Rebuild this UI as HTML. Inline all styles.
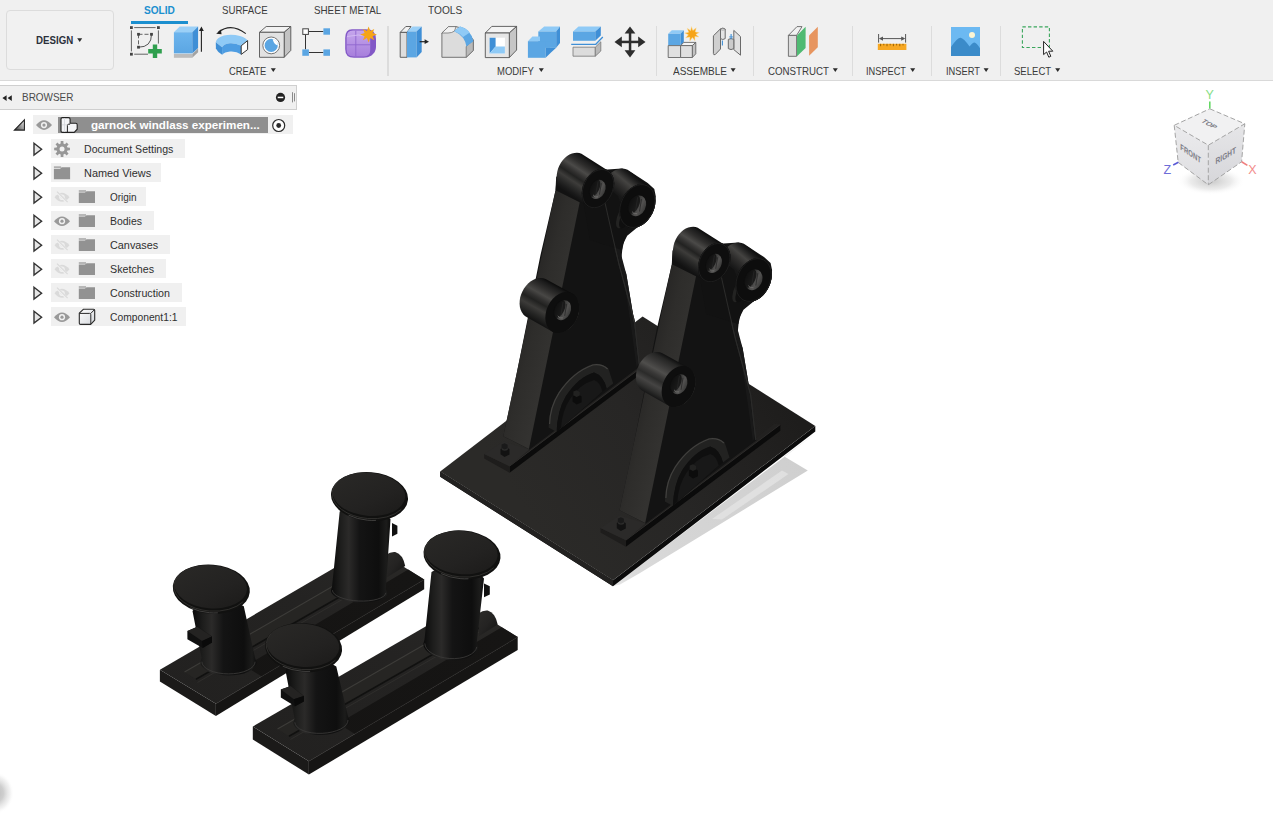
<!DOCTYPE html>
<html>
<head>
<meta charset="utf-8">
<title>Fusion 360</title>
<style>
html,body{margin:0;padding:0;background:#fff;}
body{width:1273px;height:819px;overflow:hidden;position:relative;font-family:"Liberation Sans",sans-serif;color:#3c3c3c;}
#toolbar{position:absolute;left:0;top:0;width:1273px;height:80px;background:#f0f0f0;border-bottom:1px solid #d9d9d9;}
#ws{position:absolute;left:5.5px;top:9.5px;width:108.5px;height:60.5px;border:1px solid #dcdcdc;border-radius:4px;box-sizing:border-box;background:#f1f1f1;}
.t{position:absolute;white-space:nowrap;line-height:1;transform-origin:0 0;}
.tab{font-size:10.5px;color:#3a3a3a;top:4.9px;}
.lbl{font-size:10.5px;color:#3a3a3a;top:65.7px;}
.sep{position:absolute;top:26px;width:1.5px;height:50px;background:#dcdcdc;}
.arr{position:absolute;width:0;height:0;border-left:2.6px solid transparent;border-right:2.6px solid transparent;border-top:3.6px solid #2b2b2b;top:68.5px;}
.ic{position:absolute;overflow:visible;}
#browser{position:absolute;left:0;top:85px;width:297px;height:25px;box-sizing:border-box;background:#f0f0f0;border:1px solid #cfcfcf;border-left:none;}
.rowbg{position:absolute;height:19px;background:#f0f0f0;}
.rt{font-size:10.5px;color:#2f2f2f;}
#canvas{position:absolute;left:0;top:0;}
</style>
</head>
<body>
<!-- 3D viewport -->
<svg id="canvas" width="1273" height="819" viewBox="0 0 1273 819">
<defs>
<linearGradient id="plateG" gradientUnits="userSpaceOnUse" x1="540" y1="535" x2="775" y2="385">
 <stop offset="0" stop-color="#2b2a28"/><stop offset="0.5" stop-color="#272625"/><stop offset="0.8" stop-color="#222120"/><stop offset="1" stop-color="#1e1d1c"/></linearGradient>
<linearGradient id="slabG" gradientUnits="userSpaceOnUse" x1="520" y1="300" x2="560" y2="310">
 <stop offset="0" stop-color="#242322"/><stop offset="0.5" stop-color="#2e2d2b"/><stop offset="1" stop-color="#333230"/></linearGradient>
<linearGradient id="cylG" gradientUnits="userSpaceOnUse" x1="587" y1="152" x2="561" y2="190">
 <stop offset="0" stop-color="#0d0d0d"/><stop offset="0.18" stop-color="#1a1a1a"/><stop offset="0.42" stop-color="#3d3c3b"/><stop offset="0.55" stop-color="#262625"/><stop offset="0.72" stop-color="#3a3938"/><stop offset="0.86" stop-color="#1c1c1c"/><stop offset="1" stop-color="#101010"/></linearGradient>
<linearGradient id="cyl2G" gradientUnits="userSpaceOnUse" x1="632" y1="170" x2="612" y2="198">
 <stop offset="0" stop-color="#0d0d0d"/><stop offset="0.3" stop-color="#353433"/><stop offset="0.55" stop-color="#1e1e1e"/><stop offset="1" stop-color="#0c0c0c"/></linearGradient>
<linearGradient id="cylMG" gradientUnits="userSpaceOnUse" x1="540" y1="274" x2="515" y2="312">
 <stop offset="0" stop-color="#0d0d0d"/><stop offset="0.2" stop-color="#1c1c1c"/><stop offset="0.42" stop-color="#3a3938"/><stop offset="0.58" stop-color="#252524"/><stop offset="0.75" stop-color="#363534"/><stop offset="1" stop-color="#0f0f0f"/></linearGradient>
<linearGradient id="holeG" x1="0" y1="0" x2="1" y2="0">
 <stop offset="0" stop-color="#1a1a1a"/><stop offset="0.4" stop-color="#3c3c3b"/><stop offset="0.7" stop-color="#525150"/><stop offset="1" stop-color="#3a3a39"/></linearGradient>
<linearGradient id="shadowG" gradientUnits="userSpaceOnUse" x1="620" y1="585" x2="810" y2="460">
 <stop offset="0" stop-color="#e4e4e4"/><stop offset="0.08" stop-color="#dadada"/><stop offset="0.35" stop-color="#d5d5d5"/><stop offset="1" stop-color="#cfcfcf"/></linearGradient>

<linearGradient id="cg1_A" gradientUnits="userSpaceOnUse" x1="642.5" y1="180.3" x2="612.8" y2="215.3"><stop offset="0" stop-color="#0a0a0a"/><stop offset="0.1" stop-color="#1c1c1c"/><stop offset="0.26" stop-color="#444341"/><stop offset="0.4" stop-color="#2e2d2c"/><stop offset="0.58" stop-color="#181818"/><stop offset="1" stop-color="#0c0c0c"/></linearGradient>
<linearGradient id="cg2_A" gradientUnits="userSpaceOnUse" x1="596.6" y1="163.1" x2="574.0" y2="197.5"><stop offset="0" stop-color="#0a0a0a"/><stop offset="0.08" stop-color="#1a1a1a"/><stop offset="0.22" stop-color="#2f2e2d"/><stop offset="0.36" stop-color="#4b4a48"/><stop offset="0.46" stop-color="#343332"/><stop offset="0.56" stop-color="#222221"/><stop offset="0.68" stop-color="#3d3c3a"/><stop offset="0.8" stop-color="#2a2a29"/><stop offset="0.92" stop-color="#1a1a1a"/><stop offset="1" stop-color="#121212"/></linearGradient>
<linearGradient id="cg3_A" gradientUnits="userSpaceOnUse" x1="559.7" y1="286.6" x2="538.9" y2="324.2"><stop offset="0" stop-color="#0a0a0a"/><stop offset="0.08" stop-color="#1b1b1b"/><stop offset="0.22" stop-color="#302f2e"/><stop offset="0.36" stop-color="#484745"/><stop offset="0.46" stop-color="#323130"/><stop offset="0.56" stop-color="#212120"/><stop offset="0.7" stop-color="#3c3b39"/><stop offset="0.84" stop-color="#262625"/><stop offset="1" stop-color="#111111"/></linearGradient>
<linearGradient id="cg4_B" gradientUnits="userSpaceOnUse" x1="642.5" y1="180.3" x2="612.8" y2="215.3"><stop offset="0" stop-color="#0a0a0a"/><stop offset="0.1" stop-color="#1c1c1c"/><stop offset="0.26" stop-color="#444341"/><stop offset="0.4" stop-color="#2e2d2c"/><stop offset="0.58" stop-color="#181818"/><stop offset="1" stop-color="#0c0c0c"/></linearGradient>
<linearGradient id="cg5_B" gradientUnits="userSpaceOnUse" x1="596.6" y1="163.1" x2="574.0" y2="197.5"><stop offset="0" stop-color="#0a0a0a"/><stop offset="0.08" stop-color="#1a1a1a"/><stop offset="0.22" stop-color="#2f2e2d"/><stop offset="0.36" stop-color="#4b4a48"/><stop offset="0.46" stop-color="#343332"/><stop offset="0.56" stop-color="#222221"/><stop offset="0.68" stop-color="#3d3c3a"/><stop offset="0.8" stop-color="#2a2a29"/><stop offset="0.92" stop-color="#1a1a1a"/><stop offset="1" stop-color="#121212"/></linearGradient>
<linearGradient id="cg6_B" gradientUnits="userSpaceOnUse" x1="559.7" y1="286.6" x2="538.9" y2="324.2"><stop offset="0" stop-color="#0f0f0f"/><stop offset="0.1" stop-color="#262625"/><stop offset="0.26" stop-color="#3b3a39"/><stop offset="0.4" stop-color="#4f4e4c"/><stop offset="0.5" stop-color="#3a3938"/><stop offset="0.6" stop-color="#2b2b2a"/><stop offset="0.74" stop-color="#454443"/><stop offset="0.88" stop-color="#2e2e2d"/><stop offset="1" stop-color="#161616"/></linearGradient>

<linearGradient id="capG" x1="0" y1="0" x2="1" y2="1">
 <stop offset="0" stop-color="#2a2927"/><stop offset="0.6" stop-color="#232221"/><stop offset="1" stop-color="#1b1a19"/></linearGradient>
<linearGradient id="stemG" x1="0" y1="0" x2="1" y2="0">
 <stop offset="0" stop-color="#0a0a0a"/><stop offset="0.16" stop-color="#1d1d1c"/><stop offset="0.3" stop-color="#2b2a29"/><stop offset="0.48" stop-color="#141414"/><stop offset="0.8" stop-color="#0e0e0e"/><stop offset="0.93" stop-color="#1c1c1b"/><stop offset="1" stop-color="#0d0d0d"/></linearGradient>
<linearGradient id="baseTopG" x1="0" y1="1" x2="1" y2="0">
 <stop offset="0" stop-color="#222120"/><stop offset="0.6" stop-color="#242322"/><stop offset="1" stop-color="#2a2927"/></linearGradient>
<linearGradient id="bumpG" x1="0" y1="0" x2="1" y2="1"><stop offset="0" stop-color="#2c2b29"/><stop offset="0.5" stop-color="#242322"/><stop offset="1" stop-color="#121211"/></linearGradient>

<linearGradient id="bm1" gradientUnits="userSpaceOnUse" x1="199.1" y1="693.6" x2="215.9" y2="703.8"><stop offset="0" stop-color="#222120" stop-opacity="0"/><stop offset="1" stop-color="#141312" stop-opacity="0.9"/></linearGradient>
<linearGradient id="bm2" gradientUnits="userSpaceOnUse" x1="292.1" y1="750.9" x2="308.9" y2="761.3"><stop offset="0" stop-color="#222120" stop-opacity="0"/><stop offset="1" stop-color="#141312" stop-opacity="0.9"/></linearGradient>
<radialGradient id="blobG" cx="0.5" cy="0.5" r="0.5"><stop offset="0" stop-color="#b9b9b9"/><stop offset="0.45" stop-color="#c9c9c9" stop-opacity="0.9"/><stop offset="0.8" stop-color="#e6e6e6" stop-opacity="0.5"/><stop offset="1" stop-color="#ffffff" stop-opacity="0"/></radialGradient></defs>
<polygon points="613.0,586.0 816.0,433.0 784.3,456.5 807.8,470.6 694.2,540.0 640.0,573.0 620.0,584.5" fill="url(#shadowG)" />
<polygon points="712.0,519.0 782.0,470.5 788.5,474.0 722.0,519.5" fill="#e4e4e4" opacity="0.75"/>
<polygon points="440.2,471.4 613.0,580.2 815.3,426.0 815.3,431.6 613.0,586.2 440.2,476.8" fill="#0b0b0b" />
<polygon points="440.2,471.4 613.0,580.2 613.0,586.2 440.2,476.8" fill="#222120" />
<polygon points="440.2,471.4 642.6,316.4 815.3,426.0 613.0,580.2" fill="url(#plateG)" />
<g transform="translate(0,0)">
<polygon points="509.6,472.8 664.0,356.8 664.0,350.6 509.6,466.2" fill="#0b0b0b" />
<polygon points="484.2,454.0 484.2,458.6 509.6,472.8 509.6,466.2" fill="#1e1d1c" />
<polygon points="509.6,466.2 664.0,350.6 658.0,349.8 528.0,449.5" fill="#222120" />
<path d="M509.6,466.2 L664.0,350.6" stroke="#333230" stroke-width="0.7" fill="none"/>
<polygon points="484.2,454.0 503.5,441.6 529.5,449.5 509.6,466.2" fill="#2b2a29" />
<polygon points="500.5,449.0 505.5,446.6 509.5,449.2 509.5,454.5 504.5,457.0 500.5,454.2" fill="#121212" />
<ellipse cx="504.8" cy="448.6" rx="3.2" ry="2.2" transform="rotate(0 504.8 448.6)" fill="#2c2c2b" />
<polygon points="501.6,444.6 504.6,443.2 507.6,444.8 507.6,448.2 504.6,449.6 501.6,448.0" fill="#1a1a1a" />
<polygon points="503.3,436.2 516.4,375.0 526.6,323.9 540.5,255.0 555.5,190.4 556.2,176.0 562.0,186.0 600.0,170.0 622.0,168.5 632.0,172.8 647.7,183.1 654.3,189.0 655.8,196.3 652.9,208.0 646.3,219.7 636.0,228.5 627.2,235.8 622.8,244.6 621.6,256.4 622.6,265.0 626.3,274.0 632.9,313.6 638.5,364.1 640.5,366.0 529.5,449.6" fill="#131313" />
<polygon points="604.0,203.0 612.0,212.0 621.6,256.4 626.3,274.0 632.9,313.6 638.5,364.1 636.5,367.0 631.5,330.0 624.0,280.0" fill="#191919" />
<path d="M603.8,203 L619.2,265 L634.4,321 L639.5,366" fill="none" stroke="#262626" stroke-width="0.9"/>
<polygon points="555.5,190.4 581.1,195.5 528.9,449.0 503.3,436.2" fill="url(#slabG)" />
<path d="M548.6,427.5 Q548.5,408 558,393 Q572,371.5 592.6,364 Q602,362.6 608.4,368.6 L613.2,383.6 L606.6,388.4 Q603.5,375.5 594,372.4 Q578.5,377 566,396 Q557.5,410 556.6,432Z" fill="#222221"/>
<path d="M549.6,424 Q550,407 559,393 Q573,372 592.8,365 Q601.5,363.6 607.6,369" fill="none" stroke="#41403e" stroke-width="1.2"/>
<path d="M556.6,432 Q557.5,410 566,396 Q578.5,377 594,372.4 Q603.5,375.5 606.6,388.4Z" fill="#0f0f0f"/>
<path d="M561,428 Q562,411 570,399 Q580,384 594,380 Q600,382 602.5,391.5Z" fill="#181818"/>
<polygon points="572.6,396.0 577.4,393.8 581.6,396.4 581.6,402.2 576.8,404.6 572.6,401.8" fill="#0c0c0c" />
<polygon points="573.4,391.6 576.6,390.2 579.8,391.9 579.8,395.6 576.6,397.0 573.4,395.3" fill="#222221" />
<polygon points="600.6,195.5 600.8,192.3 601.3,189.0 602.2,185.7 603.6,182.6 605.2,179.6 607.2,176.8 609.5,174.3 612.0,172.3 614.6,170.6 617.3,169.5 620.0,168.8 622.7,168.6 625.3,169.0 627.6,169.8 629.8,171.2 649.6,186.7 651.5,188.6 653.1,190.9 654.3,193.6 655.1,196.6 655.4,199.8 655.3,203.2 654.8,206.6 653.8,210.0 652.4,213.4 650.6,216.5 648.5,219.4 646.2,221.9 643.6,224.1 640.8,225.8 638.0,227.1 635.2,227.8 632.4,227.9 629.7,227.6 627.2,226.7 625.0,225.3 606.2,208.0 604.4,206.2 602.9,204.0 601.7,201.5 601.0,198.6" fill="url(#cg1_A)" />
<polygon points="555.6,190.2 556.8,174.5 557.3,171.5 558.1,168.5 559.4,165.5 560.9,162.8 562.7,160.2 564.8,158.0 567.1,156.1 569.5,154.6 572.0,153.5 574.5,152.9 576.9,152.7 579.3,153.1 581.5,153.8 583.4,155.1 609.0,171.3 610.8,173.0 612.2,175.1 613.2,177.5 613.9,180.2 614.2,183.1 614.1,186.1 613.6,189.2 612.8,192.2 611.5,195.2 609.9,198.0 608.1,200.6 605.9,202.9 603.6,204.8 601.2,206.3 598.6,207.4 596.1,208.1 593.6,208.2 591.2,207.9 589.0,207.1" fill="url(#cg2_A)" />
<ellipse cx="637.3" cy="206.0" rx="16.8" ry="23.0" transform="rotate(26 637.3 206.0)" fill="#0d0d0d" />
<ellipse cx="598.0" cy="188.6" rx="15.0" ry="20.6" transform="rotate(26 598.0 188.6)" fill="#0d0d0d" />
<polygon points="583.0,200.0 590.0,240.0 622.0,250.0 628.0,226.0 618.0,196.0 606.0,186.0" fill="#121212" />
<path d="M604.6,201 L612.5,236 L619.2,265 L634.4,321 L639.5,366" fill="none" stroke="#2b2b2a" stroke-width="1.1"/>
<ellipse cx="624.5" cy="214.5" rx="6.0" ry="15.0" transform="rotate(26 624.5 214.5)" fill="#232322" />
<ellipse cx="626.8" cy="215.5" rx="5.2" ry="14.0" transform="rotate(26 626.8 215.5)" fill="#0f0f0f" />
<ellipse cx="637.3" cy="206.0" rx="16.8" ry="23.0" transform="rotate(26 637.3 206.0)" fill="#0d0d0d" />
<ellipse cx="598.0" cy="188.6" rx="15.0" ry="20.6" transform="rotate(26 598.0 188.6)" fill="#0e0e0e" />
<ellipse cx="598.0" cy="188.6" rx="14.5" ry="20.1" transform="rotate(26 598.0 188.6)" fill="none" stroke="#1f1f1f" stroke-width="0.8"/>
<ellipse cx="637.3" cy="206.0" rx="16.3" ry="22.5" transform="rotate(26 637.3 206.0)" fill="none" stroke="#1f1f1f" stroke-width="0.8"/>
<ellipse cx="597.7" cy="189.4" rx="7.4" ry="10.0" transform="rotate(26 597.7 189.4)" fill="url(#holeG)" />
<ellipse cx="594.6" cy="188.2" rx="4.6" ry="9.2" transform="rotate(26 594.6 188.2)" fill="#0e0e0e" opacity="0.75"/>
<path d="M598.1,181.4 l-2.2,13.0 M601.4,183.2 l-2,11.5" stroke="#252525" stroke-width="1" fill="none" opacity="0.8"/>
<path d="M593.1,194.9 q1.6,3 5,2" stroke="#777674" stroke-width="1" fill="none" opacity="0.8"/>
<ellipse cx="637.3" cy="205.8" rx="8.4" ry="10.8" transform="rotate(26 637.3 205.8)" fill="url(#holeG)" />
<ellipse cx="633.8" cy="204.5" rx="5.2" ry="9.9" transform="rotate(26 633.8 204.5)" fill="#0e0e0e" opacity="0.75"/>
<path d="M637.7,197.2 l-2.2,14.0 M641.5,199.1 l-2,12.4" stroke="#252525" stroke-width="1" fill="none" opacity="0.8"/>
<path d="M632.1,211.7 q1.6,3 5,2" stroke="#777674" stroke-width="1" fill="none" opacity="0.8"/>
<polygon points="519.6,303.9 519.7,300.8 520.2,297.6 521.1,294.5 522.4,291.4 524.0,288.5 525.9,285.9 528.1,283.5 530.5,281.5 533.0,279.9 535.6,278.8 538.3,278.1 540.8,278.0 543.3,278.3 545.6,279.1 571.7,293.3 573.8,294.6 575.6,296.4 577.1,298.5 578.2,301.0 578.9,303.8 579.2,306.8 579.1,310.0 578.6,313.2 577.7,316.4 576.4,319.5 574.8,322.4 572.8,325.1 570.6,327.5 568.2,329.5 565.6,331.1 563.0,332.3 560.3,332.9 557.7,333.1 555.2,332.8 552.9,331.9 527.0,317.2 524.9,316.0 523.2,314.2 521.7,312.1 520.6,309.6 519.9,306.9" fill="url(#cg3_A)" />
<ellipse cx="562.3" cy="312.6" rx="15.7" ry="21.5" transform="rotate(26 562.3 312.6)" fill="#0e0e0e" />
<ellipse cx="562.7" cy="310.2" rx="7.9" ry="10.4" transform="rotate(26 562.7 310.2)" fill="url(#holeG)" />
<ellipse cx="559.4" cy="309.0" rx="4.9" ry="9.6" transform="rotate(26 559.4 309.0)" fill="#0e0e0e" opacity="0.75"/>
<path d="M563.1,301.9 l-2.2,13.5 M566.7,303.8 l-2,12.0" stroke="#252525" stroke-width="1" fill="none" opacity="0.8"/>
<path d="M557.8,315.9 q1.6,3 5,2" stroke="#777674" stroke-width="1" fill="none" opacity="0.8"/>
</g>
<g transform="translate(116.3,74.0)">
<polygon points="509.6,472.8 664.0,356.8 664.0,350.6 509.6,466.2" fill="#0b0b0b" />
<polygon points="484.2,454.0 484.2,458.6 509.6,472.8 509.6,466.2" fill="#1e1d1c" />
<polygon points="509.6,466.2 664.0,350.6 658.0,349.8 528.0,449.5" fill="#222120" />
<path d="M509.6,466.2 L664.0,350.6" stroke="#333230" stroke-width="0.7" fill="none"/>
<polygon points="484.2,454.0 503.5,441.6 529.5,449.5 509.6,466.2" fill="#2b2a29" />
<polygon points="500.5,449.0 505.5,446.6 509.5,449.2 509.5,454.5 504.5,457.0 500.5,454.2" fill="#121212" />
<ellipse cx="504.8" cy="448.6" rx="3.2" ry="2.2" transform="rotate(0 504.8 448.6)" fill="#2c2c2b" />
<polygon points="501.6,444.6 504.6,443.2 507.6,444.8 507.6,448.2 504.6,449.6 501.6,448.0" fill="#1a1a1a" />
<polygon points="503.3,436.2 516.4,375.0 526.6,323.9 540.5,255.0 555.5,190.4 556.2,176.0 562.0,186.0 600.0,170.0 622.0,168.5 632.0,172.8 647.7,183.1 654.3,189.0 655.8,196.3 652.9,208.0 646.3,219.7 636.0,228.5 627.2,235.8 622.8,244.6 621.6,256.4 622.6,265.0 626.3,274.0 632.9,313.6 638.5,364.1 640.5,366.0 529.5,449.6" fill="#131313" />
<polygon points="604.0,203.0 612.0,212.0 621.6,256.4 626.3,274.0 632.9,313.6 638.5,364.1 636.5,367.0 631.5,330.0 624.0,280.0" fill="#191919" />
<path d="M603.8,203 L619.2,265 L634.4,321 L639.5,366" fill="none" stroke="#262626" stroke-width="0.9"/>
<polygon points="555.5,190.4 581.1,195.5 528.9,449.0 503.3,436.2" fill="url(#slabG)" />
<path d="M548.6,427.5 Q548.5,408 558,393 Q572,371.5 592.6,364 Q602,362.6 608.4,368.6 L613.2,383.6 L606.6,388.4 Q603.5,375.5 594,372.4 Q578.5,377 566,396 Q557.5,410 556.6,432Z" fill="#222221"/>
<path d="M549.6,424 Q550,407 559,393 Q573,372 592.8,365 Q601.5,363.6 607.6,369" fill="none" stroke="#41403e" stroke-width="1.2"/>
<path d="M556.6,432 Q557.5,410 566,396 Q578.5,377 594,372.4 Q603.5,375.5 606.6,388.4Z" fill="#0f0f0f"/>
<path d="M561,428 Q562,411 570,399 Q580,384 594,380 Q600,382 602.5,391.5Z" fill="#181818"/>
<polygon points="572.6,396.0 577.4,393.8 581.6,396.4 581.6,402.2 576.8,404.6 572.6,401.8" fill="#0c0c0c" />
<polygon points="573.4,391.6 576.6,390.2 579.8,391.9 579.8,395.6 576.6,397.0 573.4,395.3" fill="#222221" />
<polygon points="600.6,195.5 600.8,192.3 601.3,189.0 602.2,185.7 603.6,182.6 605.2,179.6 607.2,176.8 609.5,174.3 612.0,172.3 614.6,170.6 617.3,169.5 620.0,168.8 622.7,168.6 625.3,169.0 627.6,169.8 629.8,171.2 649.6,186.7 651.5,188.6 653.1,190.9 654.3,193.6 655.1,196.6 655.4,199.8 655.3,203.2 654.8,206.6 653.8,210.0 652.4,213.4 650.6,216.5 648.5,219.4 646.2,221.9 643.6,224.1 640.8,225.8 638.0,227.1 635.2,227.8 632.4,227.9 629.7,227.6 627.2,226.7 625.0,225.3 606.2,208.0 604.4,206.2 602.9,204.0 601.7,201.5 601.0,198.6" fill="url(#cg4_B)" />
<polygon points="555.6,190.2 556.8,174.5 557.3,171.5 558.1,168.5 559.4,165.5 560.9,162.8 562.7,160.2 564.8,158.0 567.1,156.1 569.5,154.6 572.0,153.5 574.5,152.9 576.9,152.7 579.3,153.1 581.5,153.8 583.4,155.1 609.0,171.3 610.8,173.0 612.2,175.1 613.2,177.5 613.9,180.2 614.2,183.1 614.1,186.1 613.6,189.2 612.8,192.2 611.5,195.2 609.9,198.0 608.1,200.6 605.9,202.9 603.6,204.8 601.2,206.3 598.6,207.4 596.1,208.1 593.6,208.2 591.2,207.9 589.0,207.1" fill="url(#cg5_B)" />
<ellipse cx="637.3" cy="206.0" rx="16.8" ry="23.0" transform="rotate(26 637.3 206.0)" fill="#0d0d0d" />
<ellipse cx="598.0" cy="188.6" rx="15.0" ry="20.6" transform="rotate(26 598.0 188.6)" fill="#0d0d0d" />
<polygon points="583.0,200.0 590.0,240.0 622.0,250.0 628.0,226.0 618.0,196.0 606.0,186.0" fill="#121212" />
<path d="M604.6,201 L612.5,236 L619.2,265 L634.4,321 L639.5,366" fill="none" stroke="#2b2b2a" stroke-width="1.1"/>
<ellipse cx="624.5" cy="214.5" rx="6.0" ry="15.0" transform="rotate(26 624.5 214.5)" fill="#232322" />
<ellipse cx="626.8" cy="215.5" rx="5.2" ry="14.0" transform="rotate(26 626.8 215.5)" fill="#0f0f0f" />
<ellipse cx="637.3" cy="206.0" rx="16.8" ry="23.0" transform="rotate(26 637.3 206.0)" fill="#0d0d0d" />
<ellipse cx="598.0" cy="188.6" rx="15.0" ry="20.6" transform="rotate(26 598.0 188.6)" fill="#0e0e0e" />
<ellipse cx="598.0" cy="188.6" rx="14.5" ry="20.1" transform="rotate(26 598.0 188.6)" fill="none" stroke="#1f1f1f" stroke-width="0.8"/>
<ellipse cx="637.3" cy="206.0" rx="16.3" ry="22.5" transform="rotate(26 637.3 206.0)" fill="none" stroke="#1f1f1f" stroke-width="0.8"/>
<ellipse cx="597.7" cy="189.4" rx="7.4" ry="10.0" transform="rotate(26 597.7 189.4)" fill="url(#holeG)" />
<ellipse cx="594.6" cy="188.2" rx="4.6" ry="9.2" transform="rotate(26 594.6 188.2)" fill="#0e0e0e" opacity="0.75"/>
<path d="M598.1,181.4 l-2.2,13.0 M601.4,183.2 l-2,11.5" stroke="#252525" stroke-width="1" fill="none" opacity="0.8"/>
<path d="M593.1,194.9 q1.6,3 5,2" stroke="#777674" stroke-width="1" fill="none" opacity="0.8"/>
<ellipse cx="637.3" cy="205.8" rx="8.4" ry="10.8" transform="rotate(26 637.3 205.8)" fill="url(#holeG)" />
<ellipse cx="633.8" cy="204.5" rx="5.2" ry="9.9" transform="rotate(26 633.8 204.5)" fill="#0e0e0e" opacity="0.75"/>
<path d="M637.7,197.2 l-2.2,14.0 M641.5,199.1 l-2,12.4" stroke="#252525" stroke-width="1" fill="none" opacity="0.8"/>
<path d="M632.1,211.7 q1.6,3 5,2" stroke="#777674" stroke-width="1" fill="none" opacity="0.8"/>
<polygon points="519.6,303.9 519.7,300.8 520.2,297.6 521.1,294.5 522.4,291.4 524.0,288.5 525.9,285.9 528.1,283.5 530.5,281.5 533.0,279.9 535.6,278.8 538.3,278.1 540.8,278.0 543.3,278.3 545.6,279.1 571.7,293.3 573.8,294.6 575.6,296.4 577.1,298.5 578.2,301.0 578.9,303.8 579.2,306.8 579.1,310.0 578.6,313.2 577.7,316.4 576.4,319.5 574.8,322.4 572.8,325.1 570.6,327.5 568.2,329.5 565.6,331.1 563.0,332.3 560.3,332.9 557.7,333.1 555.2,332.8 552.9,331.9 527.0,317.2 524.9,316.0 523.2,314.2 521.7,312.1 520.6,309.6 519.9,306.9" fill="url(#cg6_B)" />
<ellipse cx="562.3" cy="312.6" rx="15.7" ry="21.5" transform="rotate(26 562.3 312.6)" fill="#0e0e0e" />
<ellipse cx="562.7" cy="310.2" rx="7.9" ry="10.4" transform="rotate(26 562.7 310.2)" fill="url(#holeG)" />
<ellipse cx="559.4" cy="309.0" rx="4.9" ry="9.6" transform="rotate(26 559.4 309.0)" fill="#0e0e0e" opacity="0.75"/>
<path d="M563.1,301.9 l-2.2,13.5 M566.7,303.8 l-2,12.0" stroke="#252525" stroke-width="1" fill="none" opacity="0.8"/>
<path d="M557.8,315.9 q1.6,3 5,2" stroke="#777674" stroke-width="1" fill="none" opacity="0.8"/>
</g>
<polygon points="159.9,669.8 215.9,703.8 215.9,716.0 159.9,681.6" fill="#1b1a19" />
<polygon points="215.9,703.8 424.2,579.5 424.2,589.2 215.9,716.0" fill="#161514" />
<polygon points="159.9,669.8 215.9,703.8 424.2,579.5 371.0,546.5" fill="url(#baseTopG)" />
<polygon points="245.1,666.3 261.7,676.5 424.2,579.5 408.2,569.6" fill="url(#bm1)" />
<path d="M215.9,703.8 L424.2,579.5" stroke="#2b2a28" stroke-width="0.7" fill="none"/>
<polygon points="184.5,672.0 386.0,555.5 398.0,563.5 196.0,679.2" fill="#262523" />
<path d="M184.5,672.0 L386.0,555.5" stroke="#3d3c39" stroke-width="1.1" fill="none"/>
<path d="M196.0,679.2 L398.0,563.5" stroke="#111110" stroke-width="1.6" fill="none"/>
<path d="M197.5,682.4 L399.5,566.7" stroke="#302f2d" stroke-width="0.9" fill="none"/>
<path d="M385.7,555.1 Q390.7,551.6 395.2,552.1 Q402.7,554.1 405.2,566.1 L386.7,577.6Z" fill="url(#bumpG)"/>
<polygon points="392.0,523.0 397.4,525.8 397.4,533.8 392.0,536.6" fill="#101010" />
<path d="M339.7,511.5 L332.1,586.2 L330.9,590.7 A28.3,11.0 2.7 0 0 387.4,593.4 L385.8,588.9 L390.5,519.2 L369.5,496.6Z" fill="url(#stemG)"/>
<path d="M332.4,590.2 A26.8,9.8 2.7 0 0 385.9,592.9" fill="none" stroke="#3b3a38" stroke-width="1" opacity="0.85"/>
<ellipse cx="369.5" cy="496.6" rx="38.6" ry="24.5" transform="rotate(5.0 369.5 496.6)" fill="#111110" />
<ellipse cx="368.9" cy="494.2" rx="36.4" ry="21.6" transform="rotate(5.0 368.9 494.2)" fill="url(#capG)" />
<ellipse cx="369.3" cy="495.6" rx="37.4" ry="23.0" transform="rotate(5.0 369.5 496.6)" fill="none" stroke="#353432" stroke-width="0.8" stroke-dasharray="95 300" stroke-dashoffset="-12"/>
<ellipse cx="369.7" cy="496.9" rx="37.6" ry="23.4" transform="rotate(5.0 369.5 496.6)" fill="none" stroke="#4a4947" stroke-width="0.8" stroke-dasharray="28 300" stroke-dashoffset="-40"/>
<path d="M192.5,610.9 L201.6,657.7 L200.4,662.2 A28.1,13.4 0.0 0 0 256.6,662.2 L255.0,657.7 L243.8,606.3 L211.3,589.1Z" fill="url(#stemG)"/>
<path d="M201.9,661.7 A26.6,12.2 0.0 0 0 255.1,661.7" fill="none" stroke="#3b3a38" stroke-width="1" opacity="0.85"/>
<polygon points="187.4,631.0 197.3,626.7 212.0,636.6 212.0,642.5 202.7,647.9 187.4,639.2" fill="#101010" />
<polygon points="187.4,631.0 197.3,626.7 212.0,636.6 202.1,640.9" fill="#242322" />
<polygon points="202.1,640.9 212.0,636.6 212.0,642.5 202.7,647.9" fill="#0a0a0a" />
<ellipse cx="211.3" cy="589.1" rx="38.6" ry="24.5" transform="rotate(4.8 211.3 589.1)" fill="#111110" />
<ellipse cx="210.7" cy="586.7" rx="36.4" ry="21.6" transform="rotate(4.8 210.7 586.7)" fill="url(#capG)" />
<ellipse cx="211.1" cy="588.1" rx="37.4" ry="23.0" transform="rotate(4.8 211.3 589.1)" fill="none" stroke="#353432" stroke-width="0.8" stroke-dasharray="95 300" stroke-dashoffset="-12"/>
<ellipse cx="211.5" cy="589.4" rx="37.6" ry="23.4" transform="rotate(4.8 211.3 589.1)" fill="none" stroke="#4a4947" stroke-width="0.8" stroke-dasharray="28 300" stroke-dashoffset="-40"/>
<polygon points="252.8,726.5 308.9,761.3 308.9,774.6 252.8,739.4" fill="#1b1a19" />
<polygon points="308.9,761.3 517.7,637.1 517.7,650.0 308.9,774.6" fill="#161514" />
<polygon points="252.8,726.5 308.9,761.3 517.7,637.1 464.5,604.0" fill="url(#baseTopG)" />
<polygon points="338.2,723.6 354.8,734.0 517.7,637.1 501.7,627.2" fill="url(#bm2)" />
<path d="M308.9,761.3 L517.7,637.1" stroke="#2b2a28" stroke-width="0.7" fill="none"/>
<polygon points="277.5,729.0 479.0,613.3 491.0,621.3 289.0,736.2" fill="#262523" />
<path d="M277.5,729.0 L479.0,613.3" stroke="#3d3c39" stroke-width="1.1" fill="none"/>
<path d="M289.0,736.2 L491.0,621.3" stroke="#111110" stroke-width="1.6" fill="none"/>
<path d="M290.5,739.4 L492.5,624.5" stroke="#302f2d" stroke-width="0.9" fill="none"/>
<path d="M478.2,613.5 Q483.2,610.0 487.7,610.5 Q495.2,612.5 497.7,624.5 L479.2,636.0Z" fill="url(#bumpG)"/>
<polygon points="484.0,583.4 489.8,586.2 489.8,594.4 484.0,597.2" fill="#101010" />
<path d="M431.5,572.0 L424.5,639.4 L423.3,643.9 A27.6,15.4 3.6 0 0 478.3,647.4 L476.7,642.9 L484.0,578.5 L462.0,555.0Z" fill="url(#stemG)"/>
<path d="M424.8,643.4 A26.1,14.2 3.6 0 0 476.8,646.9" fill="none" stroke="#3b3a38" stroke-width="1" opacity="0.85"/>
<ellipse cx="462.0" cy="555.0" rx="38.6" ry="24.5" transform="rotate(5.0 462.0 555.0)" fill="#111110" />
<ellipse cx="461.4" cy="552.6" rx="36.4" ry="21.6" transform="rotate(5.0 461.4 552.6)" fill="url(#capG)" />
<ellipse cx="461.8" cy="554.0" rx="37.4" ry="23.0" transform="rotate(5.0 462.0 555.0)" fill="none" stroke="#353432" stroke-width="0.8" stroke-dasharray="95 300" stroke-dashoffset="-12"/>
<ellipse cx="462.2" cy="555.3" rx="37.6" ry="23.4" transform="rotate(5.0 462.0 555.0)" fill="none" stroke="#4a4947" stroke-width="0.8" stroke-dasharray="28 300" stroke-dashoffset="-40"/>
<path d="M285.5,670.5 L294.5,718.3 L293.3,722.8 A28.1,13.4 -2.3 0 0 349.5,720.5 L347.9,716.0 L336.3,666.5 L303.6,647.6Z" fill="url(#stemG)"/>
<path d="M294.8,722.3 A26.6,12.2 -2.3 0 0 348.0,720.0" fill="none" stroke="#3b3a38" stroke-width="1" opacity="0.85"/>
<polygon points="280.8,689.4 290.7,686.1 303.8,696.0 303.8,701.5 295.0,706.2 280.8,697.5" fill="#101010" />
<polygon points="280.8,689.4 290.7,686.1 303.8,696.0 293.9,699.3" fill="#242322" />
<polygon points="293.9,699.3 303.8,696.0 303.8,701.5 295.0,706.2" fill="#0a0a0a" />
<ellipse cx="303.6" cy="647.6" rx="38.6" ry="24.5" transform="rotate(4.8 303.6 647.6)" fill="#111110" />
<ellipse cx="303.0" cy="645.2" rx="36.4" ry="21.6" transform="rotate(4.8 303.0 645.2)" fill="url(#capG)" />
<ellipse cx="303.4" cy="646.6" rx="37.4" ry="23.0" transform="rotate(4.8 303.6 647.6)" fill="none" stroke="#353432" stroke-width="0.8" stroke-dasharray="95 300" stroke-dashoffset="-12"/>
<ellipse cx="303.8" cy="647.9" rx="37.6" ry="23.4" transform="rotate(4.8 303.6 647.6)" fill="none" stroke="#4a4947" stroke-width="0.8" stroke-dasharray="28 300" stroke-dashoffset="-40"/>
<ellipse cx="-5" cy="793" rx="19" ry="21" fill="url(#blobG)"/>
</svg>

<!-- toolbar -->
<div id="toolbar">
  <div id="ws"></div>
  <span class="t" style="left:35.5px;top:34.7px;font-weight:bold;color:#2b303b;font-size:11px;transform:scaleX(0.882);">DESIGN</span>
  

  <span class="t tab" style="left:144.4px;color:#1b8fcf;font-weight:bold;font-size:10.5px;transform:scaleX(0.963);">SOLID</span>
  <div style="position:absolute;left:131px;top:20.5px;width:57px;height:3px;background:#1b8fcf;"></div>
  <span class="t tab" style="left:221.8px;font-size:10.5px;transform:scaleX(0.919);">SURFACE</span>
  <span class="t tab" style="left:314.4px;font-size:10.5px;transform:scaleX(0.934);">SHEET METAL</span>
  <span class="t tab" style="left:427.5px;font-size:10.5px;transform:scaleX(0.966);">TOOLS</span>

  <span class="t lbl" style="left:228.7px;font-size:10.5px;transform:scaleX(0.892);">CREATE</span>
  <span class="t lbl" style="left:496.7px;font-size:10.5px;transform:scaleX(0.903);">MODIFY</span>
  <span class="t lbl" style="left:672.5px;font-size:10.5px;transform:scaleX(0.954);">ASSEMBLE</span>
  <span class="t lbl" style="left:767.8px;font-size:10.5px;transform:scaleX(0.925);">CONSTRUCT</span>
  <span class="t lbl" style="left:866.4px;font-size:10.5px;transform:scaleX(0.879);">INSPECT</span>
  <span class="t lbl" style="left:945.6px;font-size:10.5px;transform:scaleX(0.884);">INSERT</span>
  <span class="t lbl" style="left:1014.4px;font-size:10.5px;transform:scaleX(0.908);">SELECT</span>

  <div class="sep" style="left:387px;"></div>
  <div class="sep" style="left:655.5px;"></div>
  <div class="sep" style="left:752.5px;"></div>
  <div class="sep" style="left:851.5px;"></div>
  <div class="sep" style="left:930.5px;"></div>
  <div class="sep" style="left:999.5px;"></div>
  <svg class="ic" style="left:0;top:0;" width="1273" height="80" viewBox="0 0 1273 80">
<defs>
<linearGradient id="bl1" x1="0" y1="0" x2="0" y2="1"><stop offset="0" stop-color="#6db5ee"/><stop offset="1" stop-color="#5ba6e3"/></linearGradient>
<linearGradient id="gr1" x1="0" y1="0" x2="0" y2="1"><stop offset="0" stop-color="#ececec"/><stop offset="1" stop-color="#d6d6d6"/></linearGradient>
<linearGradient id="pu1" x1="0" y1="0" x2="0" y2="1"><stop offset="0" stop-color="#c5a5ec"/><stop offset="1" stop-color="#a77fdc"/></linearGradient>
</defs>
<!-- 1 create sketch -->
<g>
<path d="M134.2,27.6 H155.6 M131.4,30.4 V51.4 M134.2,54.2 H148" fill="none" stroke="#555" stroke-width="0.9"/>
<path d="M158.4,30.4 V43.6" fill="none" stroke="#555" stroke-width="0.9"/>
<rect x="130" y="26.2" width="2.8" height="2.8" fill="#444"/><rect x="157" y="26.2" width="2.8" height="2.8" fill="#444"/><rect x="130" y="52.8" width="2.8" height="2.8" fill="#444"/>
<path d="M138.5,34.3 H151.5 M138.5,34.3 V47.2" fill="none" stroke="#555" stroke-width="0.9" stroke-dasharray="4 2"/>
<path d="M151.5,34.3 Q151.5,47.2 138.5,47.2" fill="none" stroke="#555" stroke-width="1"/>
<rect x="137.1" y="32.9" width="2.8" height="2.8" fill="#444"/><rect x="150.1" y="32.9" width="2.8" height="2.8" fill="#444"/><rect x="137.1" y="45.8" width="2.8" height="2.8" fill="#444"/>
<path d="M152.8,44.6 h4.4 v4.4 h4.6 v4.4 h-4.6 v4.6 h-4.4 v-4.6 h-4.6 v-4.4 h4.6Z" fill="#2f9f4e"/>
</g>
<!-- 2 extrude -->
<g>
<polygon points="173.9,32.2 179.7,26.4 198.1,26.4 192.3,32.2" fill="#9bd0f7"/>
<polygon points="173.9,32.2 192.3,32.2 192.3,53.4 173.9,53.4" fill="url(#bl1)"/>
<polygon points="192.3,32.2 198.1,26.4 198.1,47.9 192.3,53.4" fill="#3f8fd6"/>
<polygon points="173.9,54 192.3,54 192.3,57.8 173.9,57.8" fill="#bcbcbc"/>
<polygon points="192.3,54 198.1,48.5 198.1,52.2 192.3,57.8" fill="#a2a2a2"/>
<path d="M201.4,51.8 V29.5" stroke="#222" stroke-width="1.1"/><polygon points="201.4,26.6 203.8,31 199,31" fill="#222"/>
</g>
<!-- 3 revolve -->
<g>
<path d="M245.8,33.6 Q231,22.5 218.6,32" fill="none" stroke="#222" stroke-width="1.1"/><polygon points="216.2,33.8 220.9,29.6 221.6,34.2" fill="#222"/>
<path d="M215.8,42.2 Q216.5,37.5 224,35.4 Q232,33.6 240,36 Q246.5,38.2 247.6,40.6 L241.2,45.8 Q236,42.8 229.8,43.2 Q224,43.8 222,47.2Z" fill="#8fcaf6"/>
<path d="M215.8,42.2 L222,47.2 L222.2,54.8 Q217.5,52 215.9,48.4Z" fill="#3f8fd6"/>
<path d="M222,47.2 Q224,43.8 229.8,43.2 Q236,42.8 241.2,45.8 L241.2,54.4 Q236,51 230,51.6 Q224.5,52.2 222.2,54.8Z" fill="#4e9de2"/>
<polygon points="241.2,45.8 247.6,40.6 247.6,49.6 241.2,54.4" fill="#fff" stroke="#333" stroke-width="1"/>
</g>
<!-- 4 hole -->
<g stroke="#555" stroke-width="0.9" stroke-linejoin="round">
<polygon points="259.5,32.3 266.2,26.5 290.8,26.5 284.2,32.3" fill="#f2f2f2"/>
<polygon points="284.2,32.3 290.8,26.5 290.8,50.4 284.2,57.3" fill="#c3c3c3"/>
<polygon points="259.5,32.3 284.2,32.3 284.2,57.3 259.5,57.3" fill="#e2e2e2"/>
<circle cx="271.2" cy="45.4" r="8.4" fill="#fff" stroke="#666"/>
<circle cx="271.2" cy="45.4" r="6.6" fill="#5ba6e3" stroke="none"/>
<path d="M272.6,39 A6.6,6.6 0 0 1 277.8,45.6 Q274,44.6 272.6,39Z" fill="#fff" stroke="none"/>
</g>
<!-- 5 pattern -->
<g>
<path d="M308.6,31.5 H323.4 M305.5,34.7 V49.4 M309,52.5 H323.4" stroke="#333" stroke-width="1" fill="none"/>
<rect x="302.8" y="28.8" width="5.6" height="5.6" fill="#fff" stroke="#444" stroke-width="1"/>
<rect x="323.4" y="28.3" width="6.6" height="6.4" fill="#5ba6e3"/>
<rect x="302.3" y="49.4" width="6.6" height="6.4" fill="#5ba6e3"/>
<rect x="323.4" y="49.4" width="6.6" height="6.4" fill="#5ba6e3"/>
</g>
<!-- 6 form -->
<g>
<path d="M352,29.2 H366 Q376,29.2 376,39 V47 Q376,52 371.5,55.4 Q368,57.8 363.5,57.8 H354 Q345.2,57.8 345.2,49 V38 Q345.2,29.2 352,29.2Z" fill="#8258c6"/>
<path d="M353,30.6 H364 Q370.2,30.6 370.2,37 V50 Q370.2,56.4 364,56.4 H353.5 Q346.6,56.4 346.6,49.5 V37.5 Q346.6,30.6 353,30.6Z" fill="url(#pu1)"/>
<path d="M355.8,30.8 V56.2 M346.8,44.8 H370" stroke="#8e66cf" stroke-width="0.9" fill="none"/>
<path d="M347,36.5 Q358,33.5 370,36.5" stroke="#d5bdf3" stroke-width="0.9" fill="none"/>
<polygon points="368.6,26.6 370.3,31.1 374.3,28.9 372.6,33 377,34.6 372.6,36.2 374.3,40.3 370.3,38.1 368.6,42.6 366.9,38.1 362.9,40.3 364.6,36.2 360.2,34.6 364.6,33 362.9,28.9 366.9,31.1" fill="#f6a417"/>
</g>
</svg>

<svg class="ic" style="left:0;top:0;" width="1273" height="80" viewBox="0 0 1273 80">
<!-- 7 press pull -->
<g>
<polygon points="400.2,32.4 405.8,26.5 411,26.5 407,32.4" fill="#f2f2f2" stroke="#555" stroke-width="0.9"/>
<polygon points="400.2,32.4 407,32.4 407,57.3 400.2,57.3" fill="#dedede" stroke="#555" stroke-width="0.9"/>
<polygon points="407,31.5 412.6,26.4 421.7,26.4 416.5,31.5" fill="#9bd0f7"/>
<polygon points="407,31.5 416.5,31.5 416.5,57.4 407,57.4" fill="#5ba6e3"/>
<polygon points="416.5,31.5 421.7,26.4 421.7,52 416.5,57.4" fill="#3f8fd6"/>
<path d="M419.6,41.7 H426" stroke="#222" stroke-width="1.2"/><polygon points="429,41.7 424.6,39.3 424.6,44.1" fill="#222"/>
</g>
<!-- 8 fillet -->
<g>
<path d="M441.9,57.3 V33 L448.5,26.6 H456 Q466,28 473.3,40 V50.5 L466.2,57.3Z" fill="#dcdcdc" stroke="#666" stroke-width="0.9" stroke-linejoin="round"/>
<path d="M441.9,33 L448.5,26.6 H456 L454.5,31 Q452,33 448,33Z" fill="#f2f2f2" stroke="#666" stroke-width="0.7"/>
<path d="M466.2,57.3 V46.5 L473.3,40 V50.5Z" fill="#b9b9b9" stroke="#666" stroke-width="0.7"/>
<path d="M454.2,31.2 L460,26.6 Q470.5,29 473.4,41.2 L466.4,46.6 Q465,36 454.2,31.2Z" fill="#5ba6e3"/>
<path d="M454.2,31.2 L460,26.6 Q466,28 469.8,32.5 L463,37 Q459.5,33 454.2,31.2Z" fill="#8fcaf6"/>
</g>
<!-- 9 shell -->
<g stroke="#555" stroke-width="0.9" stroke-linejoin="round">
<polygon points="485.3,33 491.8,26.4 516.6,26.4 509.3,33" fill="#f4f4f4"/>
<polygon points="509.3,33 516.6,26.4 516.6,50 509.3,57.6" fill="#c6c6c6"/>
<polygon points="485.3,33 509.3,33 509.3,57.6 485.3,57.6" fill="#e6e6e6"/>
</g>
<rect x="489.6" y="37.7" width="15.3" height="15.7" fill="#fff"/>
<polygon points="489.6,37.7 495.6,37.7 495.6,46.6 489.6,53.4" fill="#3f8fd6"/>
<polygon points="495.6,46.6 504.9,46.6 504.9,53.4 489.6,53.4" fill="#8fcaf6"/>
<!-- 10 combine -->
<g>
<polygon points="538.3,31.5 544.2,26.4 560,26.4 556.2,31.5" fill="#8fcaf6"/>
<polygon points="538.3,31.5 556.2,31.5 556.2,47.8 538.3,47.8" fill="#5ba6e3"/>
<polygon points="556.2,31.5 560,26.4 560,43 556.2,47.8" fill="#3f8fd6"/>
<polygon points="527.9,41.2 532.4,36.6 540,36.6 540,41.2" fill="#8fcaf6"/>
<polygon points="527.9,41.2 545.6,41.2 545.6,57.8 527.9,57.8" fill="#5ba6e3"/>
<polygon points="545.6,47.8 556.2,47.8 551,52.4 545.6,57.8" fill="#3f8fd6"/>
<polygon points="545.6,41.2 550,41.2 550,47.8 545.6,47.8" fill="#5ba6e3"/>
</g>
<!-- 11 split -->
<g>
<polygon points="573,31.5 578.5,26.4 600.8,26.4 595.3,31.5" fill="#8fcaf6"/>
<polygon points="573,31.5 595.3,31.5 595.3,40.8 573,40.8" fill="#5ba6e3"/>
<polygon points="595.3,31.5 600.8,26.4 600.8,35.6 595.3,40.8" fill="#3f8fd6"/>
<polygon points="573,47.2 595.3,47.2 595.3,56.2 573,56.2" fill="#dcdcdc" stroke="#777" stroke-width="0.8"/>
<polygon points="595.3,47.2 600.8,41.8 600.8,51 595.3,56.2" fill="#b9b9b9" stroke="#777" stroke-width="0.8"/>
<path d="M571.2,44.3 H595.8 L602.8,37" fill="none" stroke="#3f8fd6" stroke-width="1.3"/>
</g>
<!-- 12 move -->
<g fill="#2d2d2d">
<rect x="628.8" y="30" width="2.5" height="24"/><rect x="618" y="40.7" width="24" height="2.5"/>
<polygon points="630,26.4 635.4,33.6 624.6,33.6"/><polygon points="630,57.4 635.4,50.2 624.6,50.2"/>
<polygon points="614.5,41.9 621.8,36.6 621.8,47.2"/><polygon points="645.5,41.9 638.2,36.6 638.2,47.2"/>
</g>
<!-- 13 new component -->
<g>
<polygon points="668.2,33.8 671.8,30.2 683.8,30.2 680.6,33.8" fill="#8fcaf6"/>
<polygon points="668.2,33.8 680.6,33.8 680.6,45.6 668.2,45.6" fill="#5ba6e3"/>
<polygon points="680.6,33.8 683.8,30.2 683.8,42.4 680.6,45.6" fill="#3f8fd6"/>
<g stroke="#666" stroke-width="0.9" stroke-linejoin="round">
<polygon points="680.6,45.6 683.8,42.4 695.8,42.4 692.3,45.6" fill="#f4f4f4"/>
<polygon points="692.3,45.6 695.8,42.4 695.8,53.8 692.3,57.5" fill="#c2c2c2"/>
<polygon points="668.2,45.6 680.6,45.6 680.6,57.5 668.2,57.5" fill="#e0e0e0"/>
<polygon points="680.6,45.6 692.3,45.6 692.3,57.5 680.6,57.5" fill="#e0e0e0"/>
</g>
<polygon points="691.4,26.4 692.9,30.4 696.2,27.8 695.4,31.9 699.3,32.6 695.9,34.4 699,37 694.9,36.6 695,40.8 692.4,37.6 689.8,41.2 689.7,37 685.6,38 688.3,34.8 684.6,33 688.6,32.2 687.2,28.2 690.6,30.6" fill="#f6a417" stroke="#fbe3a8" stroke-width="0.5"/>
</g>
<!-- 14 joint -->
<g stroke="#6a6a6a" stroke-width="1" stroke-linejoin="round">
<path d="M713.4,35.8 L720.5,28.8 V49 L715.2,54.6 Q713.4,55.2 713.4,53.6Z" fill="#cfcfcf"/>
<path d="M720.5,29 Q722.8,27.2 725.2,29 V38.6 Q722.8,40.4 720.5,38.6Z" fill="#e4e4e4"/>
<ellipse cx="722.85" cy="29.2" rx="2.1" ry="0.8" fill="#fafafa" stroke-width="0.6"/>
<path d="M733.8,30.4 L740.5,36.6 V55.2 L733.8,49.6Z" fill="#e0e0e0"/>
<path d="M728.3,39.4 Q731,37.6 733.8,39.4 V48.6 Q731,50.6 728.3,48.6Z" fill="#cbcbcb"/>
</g>
<path d="M722.4,40.6 V45.6 M731.1,34 V39.2" stroke="#3f8fd6" stroke-width="1.1" fill="none"/><path d="M729.2,36.9 H733" stroke="#3f8fd6" stroke-width="0.9"/>
<!-- 15 construct -->
<g>
<polygon points="788.4,35.4 797,26.6 802,26.6 796.6,35.4" fill="#f2f2f2" stroke="#666" stroke-width="0.9"/>
<polygon points="788.4,35.4 796.6,35.4 796.6,56.3 788.4,56.3" fill="#dcdcdc" stroke="#666" stroke-width="0.9"/>
<polygon points="797,35.4 805.6,26.8 805.6,48 797,56.3" fill="#4fba72"/>
<polygon points="809.1,35.4 817.8,26.8 817.8,47.2 809.1,55.8" fill="#e7955f"/>
</g>
<!-- 16 inspect -->
<g>
<path d="M878.6,34 V42.6 M905.6,34 V42.6 M880,38.6 H904" stroke="#555" stroke-width="1" fill="none"/>
<polygon points="878.9,38.6 883,36.4 883,40.8" fill="#555"/><polygon points="905.3,38.6 901.2,36.4 901.2,40.8" fill="#555"/>
<rect x="877.8" y="43.8" width="28.6" height="6.2" fill="#f7a823"/>
<path d="M880.6,43.8 v2.4 M883.8,43.8 v1.6 M887,43.8 v2.4 M890.2,43.8 v1.6 M893.4,43.8 v2.4 M896.6,43.8 v1.6 M899.8,43.8 v2.4 M903,43.8 v1.6" stroke="#8f5a00" stroke-width="0.9"/>
</g>
<!-- 17 insert -->
<g>
<rect x="951" y="27" width="29" height="29" fill="#6cb9f2"/>
<path d="M951,47 Q957.5,37.6 960.6,37.8 Q963.5,38 969.6,46.6 Q972.6,42.6 974.4,42.6 Q976.4,42.8 980,48.2 V56 H951Z" fill="#3b8bc9"/>
<circle cx="972" cy="34.9" r="3" fill="#fdf5d3"/>
</g>
<!-- 18 select -->
<g>
<rect x="1022.4" y="26.9" width="27" height="20.6" fill="none" stroke="#3aa65c" stroke-width="1.1" stroke-dasharray="3.4 2.2"/>
<path d="M1043.6,41.4 V54.6 L1046.6,52 L1048.8,57.2 L1050.8,56.3 L1048.6,51.2 H1052.8Z" fill="#fff" stroke="#222" stroke-width="1" stroke-linejoin="round"/>
</g>
<!-- dropdown arrows -->
<g fill="#2b2b2b">
<polygon points="77.2,38.3 82.2,38.3 79.7,41.9"/>
<polygon points="270.8,68.3 275.8,68.3 273.3,71.9"/>
<polygon points="538.8,68.3 543.8,68.3 541.3,71.9"/>
<polygon points="730.6,68.3 735.6,68.3 733.1,71.9"/>
<polygon points="832.8,68.3 837.8,68.3 835.3,71.9"/>
<polygon points="910.2,68.3 915.2,68.3 912.7,71.9"/>
<polygon points="983.6,68.3 988.6,68.3 986.1,71.9"/>
<polygon points="1055.2,68.3 1060.2,68.3 1057.7,71.9"/>
</g>
</svg>

</div>

<!-- browser -->
<div id="browser"></div>
<span class="t" style="left:22.4px;top:91.9px;color:#4a4a4a;font-size:11px;transform:scaleX(0.904);">BROWSER</span>


<div class="rowbg" style="left:33px;top:115.2px;width:260px;height:19.3px;"></div>
<div style="position:absolute;left:58px;top:117.2px;width:210px;height:15.7px;background:#8f8f8f;"></div>
<span class="t" style="left:91.4px;top:119.8px;font-weight:bold;color:#fff;font-size:11.5px;transform:scaleX(1.011);">garnock windlass experimen...</span>

<div class="rowbg" style="left:51px;top:139.4px;width:134px;"></div>
<span class="t rt" style="left:84.4px;top:143.7px;font-size:11px;transform:scaleX(0.961);">Document Settings</span>
<div class="rowbg" style="left:51px;top:163.4px;width:110px;"></div>
<span class="t rt" style="left:84.4px;top:167.7px;font-size:11px;transform:scaleX(0.992);">Named Views</span>
<div class="rowbg" style="left:51px;top:187.4px;width:95px;"></div>
<span class="t rt" style="left:109.6px;top:191.7px;font-size:11px;transform:scaleX(0.906);">Origin</span>
<div class="rowbg" style="left:51px;top:211.4px;width:103px;"></div>
<span class="t rt" style="left:109.6px;top:215.7px;font-size:11px;transform:scaleX(0.951);">Bodies</span>
<div class="rowbg" style="left:51px;top:235.4px;width:119px;"></div>
<span class="t rt" style="left:109.6px;top:239.7px;font-size:11px;transform:scaleX(0.985);">Canvases</span>
<div class="rowbg" style="left:51px;top:259.4px;width:115px;"></div>
<span class="t rt" style="left:109.6px;top:263.7px;font-size:11px;transform:scaleX(0.975);">Sketches</span>
<div class="rowbg" style="left:51px;top:283.4px;width:131px;"></div>
<span class="t rt" style="left:109.6px;top:287.7px;font-size:11px;transform:scaleX(0.970);">Construction</span>
<div class="rowbg" style="left:51px;top:307.4px;width:135px;"></div>
<span class="t rt" style="left:109.6px;top:311.7px;font-size:11px;transform:scaleX(0.935);">Component1:1</span>
<svg style="position:absolute;left:0;top:0;" width="300" height="335" viewBox="0 0 300 335">
<defs><linearGradient id="tg" x1="0" y1="1" x2="1" y2="0.3"><stop offset="0" stop-color="#3a3a3a"/><stop offset="1" stop-color="#d8d8d8"/></linearGradient><linearGradient id="cg" x1="0" y1="0" x2="1" y2="1"><stop offset="0" stop-color="#ffffff"/><stop offset="1" stop-color="#d4d7dc"/></linearGradient></defs>
<path d="M6.6,95.2 v5.8 l-4.2,-2.9Z M11.8,95.2 v5.8 l-4.2,-2.9Z" fill="#222"/>
<circle cx="280.5" cy="97.4" r="4.6" fill="#222"/><rect x="277.7" y="96.7" width="5.6" height="1.5" fill="#fff"/>
<path d="M292.5,92.2 v10.2 M294.5,93.2 v8.2" stroke="#8a8a8a" stroke-width="1"/>
<path d="M24.4,119.8 V130.1 H14.4Z" fill="url(#tg)" stroke="#222" stroke-width="1.1" stroke-linejoin="miter"/>
<path d="M36,125.1 Q44,115.5 52,125.1 Q44,134.7 36,125.1Z" fill="#999"/><circle cx="44" cy="125.1" r="3.1" fill="#f0f0f0"/><circle cx="44" cy="125.1" r="1.6" fill="#999"/>
<path d="M62.3,117.6 h6.2 q1.6,0 1.6,1.6 v4 h5.6 q1.5,0 1.5,1.5 v4.5 l-3,3.2 h-11.9 q-1.3,0 -1.3,-1.3 v-12.2 q0,-1.3 1.3,-1.3Z" fill="#f4f5f7" stroke="#222" stroke-width="1.1"/>
<path d="M67.4,132.3 v-6.8 q0,-1.3 1.3,-1.3 h1.4" fill="none" stroke="#222" stroke-width="1"/>
<path d="M62,124.8 h5.2 M64.5,118 v14" stroke="#d5d8dd" stroke-width="0.8"/>
<circle cx="278.7" cy="125.5" r="6" fill="#fff" stroke="#2a2a2a" stroke-width="1.2"/><circle cx="278.7" cy="125.5" r="2.4" fill="#2a2a2a"/>
<path d="M34,143.29999999999998 L41.6,149.2 L34,155.1Z" fill="#e6e6e6" stroke="#333" stroke-width="1.4" stroke-linejoin="miter"/>
<path d="M34,167.29999999999998 L41.6,173.2 L34,179.1Z" fill="#e6e6e6" stroke="#333" stroke-width="1.4" stroke-linejoin="miter"/>
<path d="M34,191.29999999999998 L41.6,197.2 L34,203.1Z" fill="#e6e6e6" stroke="#333" stroke-width="1.4" stroke-linejoin="miter"/>
<path d="M34,215.29999999999998 L41.6,221.2 L34,227.1Z" fill="#e6e6e6" stroke="#333" stroke-width="1.4" stroke-linejoin="miter"/>
<path d="M34,239.29999999999998 L41.6,245.2 L34,251.1Z" fill="#e6e6e6" stroke="#333" stroke-width="1.4" stroke-linejoin="miter"/>
<path d="M34,263.3 L41.6,269.2 L34,275.09999999999997Z" fill="#e6e6e6" stroke="#333" stroke-width="1.4" stroke-linejoin="miter"/>
<path d="M34,287.3 L41.6,293.2 L34,299.09999999999997Z" fill="#e6e6e6" stroke="#333" stroke-width="1.4" stroke-linejoin="miter"/>
<path d="M34,311.3 L41.6,317.2 L34,323.09999999999997Z" fill="#e6e6e6" stroke="#333" stroke-width="1.4" stroke-linejoin="miter"/>
<polygon points="67.48,147.61 69.93,147.65 69.93,150.35 67.48,150.39 66.87,151.86 68.58,153.62 66.67,155.53 64.91,153.82 63.44,154.43 63.40,156.88 60.70,156.88 60.66,154.43 59.19,153.82 57.43,155.53 55.52,153.62 57.23,151.86 56.62,150.39 54.17,150.35 54.17,147.65 56.62,147.61 57.23,146.14 55.52,144.38 57.43,142.47 59.19,144.18 60.66,143.57 60.70,141.12 63.40,141.12 63.44,143.57 64.91,144.18 66.67,142.47 68.58,144.38 66.87,146.14" fill="#979797"/><circle cx="62.05" cy="149.0" r="2.5" fill="#f0f0f0"/>
<path d="M53.9,166.5 h7.2 v1.2 h-7.2Z" fill="#929292"/><path d="M53.9,168.7 h6.2 l1.6,-1.4 h8.4 v11.9 h-16.2Z" fill="#929292"/>
<path d="M78.8,190.39999999999998 h7.2 v1.2 h-7.2Z" fill="#929292"/><path d="M78.8,192.59999999999997 h6.2 l1.6,-1.4 h8.4 v11.9 h-16.2Z" fill="#929292"/>
<path d="M78.8,214.39999999999998 h7.2 v1.2 h-7.2Z" fill="#929292"/><path d="M78.8,216.59999999999997 h6.2 l1.6,-1.4 h8.4 v11.9 h-16.2Z" fill="#929292"/>
<path d="M78.8,238.39999999999998 h7.2 v1.2 h-7.2Z" fill="#929292"/><path d="M78.8,240.59999999999997 h6.2 l1.6,-1.4 h8.4 v11.9 h-16.2Z" fill="#929292"/>
<path d="M78.8,262.4 h7.2 v1.2 h-7.2Z" fill="#929292"/><path d="M78.8,264.59999999999997 h6.2 l1.6,-1.4 h8.4 v11.9 h-16.2Z" fill="#929292"/>
<path d="M78.8,286.4 h7.2 v1.2 h-7.2Z" fill="#929292"/><path d="M78.8,288.59999999999997 h6.2 l1.6,-1.4 h8.4 v11.9 h-16.2Z" fill="#929292"/>
<path d="M54.5,197.2 Q62,188.2 69.5,197.2 Q62,206.2 54.5,197.2Z" fill="#dadada"/><circle cx="62" cy="197.2" r="2.8" fill="#f0f0f0"/><circle cx="62" cy="197.2" r="1.4" fill="#dadada"/><path d="M56.5,191.7 L67.5,202.7" stroke="#f0f0f0" stroke-width="2.6"/><path d="M57,191.6 L67.6,202.2" stroke="#dadada" stroke-width="1.2"/>
<path d="M54,221.2 Q62,211.6 70,221.2 Q62,230.79999999999998 54,221.2Z" fill="#999"/><circle cx="62" cy="221.2" r="3.1" fill="#f0f0f0"/><circle cx="62" cy="221.2" r="1.6" fill="#999"/>
<path d="M54.5,245.2 Q62,236.2 69.5,245.2 Q62,254.2 54.5,245.2Z" fill="#dadada"/><circle cx="62" cy="245.2" r="2.8" fill="#f0f0f0"/><circle cx="62" cy="245.2" r="1.4" fill="#dadada"/><path d="M56.5,239.7 L67.5,250.7" stroke="#f0f0f0" stroke-width="2.6"/><path d="M57,239.6 L67.6,250.2" stroke="#dadada" stroke-width="1.2"/>
<path d="M54.5,269.2 Q62,260.2 69.5,269.2 Q62,278.2 54.5,269.2Z" fill="#dadada"/><circle cx="62" cy="269.2" r="2.8" fill="#f0f0f0"/><circle cx="62" cy="269.2" r="1.4" fill="#dadada"/><path d="M56.5,263.7 L67.5,274.7" stroke="#f0f0f0" stroke-width="2.6"/><path d="M57,263.59999999999997 L67.6,274.2" stroke="#dadada" stroke-width="1.2"/>
<path d="M54.5,293.2 Q62,284.2 69.5,293.2 Q62,302.2 54.5,293.2Z" fill="#dadada"/><circle cx="62" cy="293.2" r="2.8" fill="#f0f0f0"/><circle cx="62" cy="293.2" r="1.4" fill="#dadada"/><path d="M56.5,287.7 L67.5,298.7" stroke="#f0f0f0" stroke-width="2.6"/><path d="M57,287.59999999999997 L67.6,298.2" stroke="#dadada" stroke-width="1.2"/>
<path d="M54,317.2 Q62,307.59999999999997 70,317.2 Q62,326.8 54,317.2Z" fill="#999"/><circle cx="62" cy="317.2" r="3.1" fill="#f0f0f0"/><circle cx="62" cy="317.2" r="1.6" fill="#999"/>
<path d="M79.3,313.2 l4,-3.9 h10.2 q1.2,0 1.2,1.2 v9.6 l-4,4.3 h-10.2 q-1.2,0 -1.2,-1.2Z" fill="url(#cg)" stroke="#2a2a2a" stroke-width="1.1" stroke-linejoin="round"/>
<path d="M79.6,313.4 h10 q1.2,0 1.2,1.2 v9.4 M90.6,313.6 l3.8,-3.9" fill="none" stroke="#2a2a2a" stroke-width="1"/>
</svg>

<svg style="position:absolute;left:1140px;top:82px;" width="133" height="130" viewBox="1140 82 133 130">
<defs>
<radialGradient id="vcsh" cx="0.5" cy="0.5" r="0.5"><stop offset="0" stop-color="#9a9a9a" stop-opacity="0.55"/><stop offset="0.6" stop-color="#b0b0b0" stop-opacity="0.25"/><stop offset="1" stop-color="#ffffff" stop-opacity="0"/></radialGradient>
<linearGradient id="vcf" x1="0" y1="0" x2="0" y2="1"><stop offset="0" stop-color="#ebebed"/><stop offset="1" stop-color="#dedee1"/></linearGradient>
<linearGradient id="vcr" x1="0" y1="0" x2="0" y2="1"><stop offset="0" stop-color="#e6e6e8"/><stop offset="1" stop-color="#d6d6da"/></linearGradient>
</defs>
<ellipse cx="1211" cy="181" rx="34" ry="14" fill="url(#vcsh)"/>
<polygon points="1209.8,108.8 1244.8,123.8 1208.3,145.2 1174.2,125.3" fill="#f1f1f2"/>
<polygon points="1174.2,125.3 1208.3,145.2 1208.3,184.8 1178.2,162.4" fill="url(#vcf)"/>
<polygon points="1208.3,145.2 1244.8,123.8 1241.6,161.8 1208.3,184.8" fill="url(#vcr)"/>
<g fill="none" stroke="#9b9b9b" stroke-width="0.9" stroke-dasharray="5 2.5">
<path d="M1209.8,108.8 L1244.8,123.8 L1208.3,145.2 L1174.2,125.3Z"/>
<path d="M1174.2,125.3 L1178.2,162.4 L1208.3,184.8 L1241.6,161.8 L1244.8,123.8"/>
<path d="M1208.3,145.2 V184.8"/>
</g>
<path d="M1209.8,108.6 V101.5" stroke="#63d863" stroke-width="1.6"/>
<path d="M1178.4,162.2 L1173.2,165" stroke="#5b5bd6" stroke-width="1.6"/>
<path d="M1241.6,161.8 L1247.4,165.4" stroke="#f07f7f" stroke-width="1.6"/>
<g font-family="'Liberation Sans',sans-serif">
<text x="1209.7" y="98.8" font-size="12.5" fill="#86de86" text-anchor="middle">Y</text>
<text x="1167.2" y="173.8" font-size="12.5" fill="#6d6dd8" text-anchor="middle">Z</text>
<text x="1252.4" y="174.2" font-size="12.5" fill="#f28c8c" text-anchor="middle">X</text>
<text font-size="8.6" fill="#7c7c86" font-weight="bold" transform="matrix(0.70,0.475,0,1,1180.3,149.4)">FRONT</text>
<text font-size="8.6" fill="#7c7c86" font-weight="bold" transform="matrix(0.76,-0.45,0,1,1215.6,164.6)">RIGHT</text>
<text font-size="8.6" fill="#7c7c86" font-weight="bold" transform="matrix(0.76,0.44,-0.72,0.42,1200.6,121.4)">TOP</text>
</g>
</svg>

</body>
</html>
